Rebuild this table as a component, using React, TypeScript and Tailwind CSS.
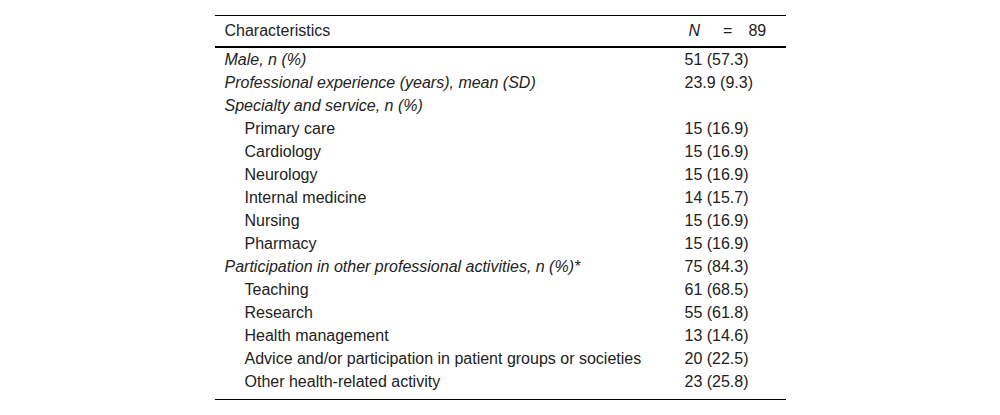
import React from "react";

type Row = { label: string; value: string; italic?: boolean; indent?: boolean };

const rows: Row[] = [
  { label: "Male, n (%)", value: "51 (57.3)", italic: true },
  { label: "Professional experience (years), mean (SD)", value: "23.9 (9.3)", italic: true },
  { label: "Specialty and service, n (%)", value: "", italic: true },
  { label: "Primary care", value: "15 (16.9)", indent: true },
  { label: "Cardiology", value: "15 (16.9)", indent: true },
  { label: "Neurology", value: "15 (16.9)", indent: true },
  { label: "Internal medicine", value: "14 (15.7)", indent: true },
  { label: "Nursing", value: "15 (16.9)", indent: true },
  { label: "Pharmacy", value: "15 (16.9)", indent: true },
  { label: "Participation in other professional activities, n (%)*", value: "75 (84.3)", italic: true },
  { label: "Teaching", value: "61 (68.5)", indent: true },
  { label: "Research", value: "55 (61.8)", indent: true },
  { label: "Health management", value: "13 (14.6)", indent: true },
  { label: "Advice and/or participation in patient groups or societies", value: "20 (22.5)", indent: true },
  { label: "Other health-related activity", value: "23 (25.8)", indent: true },
];

export default function App() {
  return (
    <div className="w-[1000px] h-[415px] bg-white pt-[15px] text-[16px] text-[#222]" style={{ fontFamily: '"Liberation Sans", Arial, sans-serif' }}>
      <div className="mx-auto w-[571px] border-t border-b border-black pb-[6px]">
        <div className="flex items-center h-[32px] border-b-2 border-black">
          <div className="w-[470px] pl-[10px]">Characteristics</div>
          <div className="flex items-center pl-[4px]">
            <span className="italic">N</span>
            <span className="ml-[23px]">=</span>
            <span className="ml-[16px]">89</span>
          </div>
        </div>
        {rows.map((r, i) => (
          <div key={i} className="flex items-center h-[23px] whitespace-nowrap">
            <div className={`w-[470px] pl-[10px] ${r.italic ? "italic" : ""}`}>
              <span className={r.indent ? "pl-[20px]" : ""}>{r.label}</span>
            </div>
            <div>{r.value}</div>
          </div>
        ))}
      </div>
    </div>
  );
}
